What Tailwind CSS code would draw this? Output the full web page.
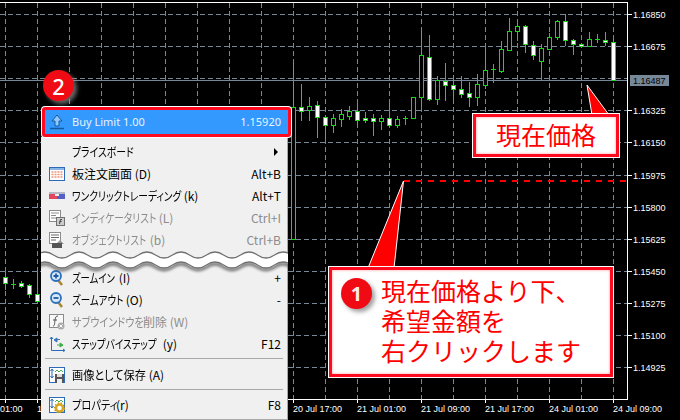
<!DOCTYPE html>
<html lang="ja">
<head>
    <meta charset="UTF-8">
    <title>MT4 Buy Limit</title>
    <script src="https://cdn.jsdelivr.net/npm/@tailwindcss/browser@4"></script>
</head>
<body class="bg-black">
    <div class="relative w-[680px] h-[420px] overflow-hidden bg-black font-['Noto_Sans_CJK_JP',sans-serif]">
        <!-- chart canvas, filled in by the script below -->
        <svg id="chart" class="block" width="680" height="420" viewBox="0 0 680 420"></svg>

        <!-- context menu -->
        <div class="absolute left-[41px] top-[137px] w-[247px] h-[283px] pt-[4px] bg-[#f0f0f0] border-r border-b border-[#a8a8a8] text-[12px] leading-none text-black whitespace-nowrap [font-feature-settings:'palt']">
            <div class="flex items-center justify-between h-[22px] pl-[31px] pr-[9px]">
                <span class="inline-block w-[62px] origin-left scale-x-[.82]">プライスボード</span>
                <span class="w-0 h-0 border-y-[4px] border-y-transparent border-l-[4px] border-l-black"></span>
            </div>
            <div class="flex items-center h-[22px] pl-[8px] pr-[6px]">
                <svg class="w-4 h-4 mr-[7px]" viewBox="0 0 16 16"><rect x=".5" y="1.500" width="15" height="13" fill="#fff" stroke="#2a6cb8"/><rect x="1" y="2" width="14" height="2" fill="#8ab4e4"/><path d="M2.500 6h2M5.500 6h2M8.500 6h2M11.500 6h2M2.500 8.500h2M5.500 8.500h2M8.500 8.500h2M11.500 8.500h2M2.500 11h2M5.500 11h2M8.500 11h2M11.500 11h2" stroke="#e8947c" stroke-width="1.500"/></svg>
                <span class="flex-1">板注文画面 (D)</span><span>Alt+B</span>
            </div>
            <div class="flex items-center h-[22px] pl-[8px] pr-[6px]">
                <svg class="w-4 h-4 mr-[7px]" viewBox="0 0 16 16"><rect x="0" y="4" width="8" height="7" fill="#e2485c"/><rect x="8" y="4" width="8" height="7" fill="#5560c4"/><rect x="0" y="4" width="16" height="2" fill="#b8b8c4"/><rect x="6" y="6" width="4" height="2" fill="#f0f0f0"/></svg>
                <span class="flex-1"><span class="inline-block w-[109px] origin-left scale-x-[.81]">ワンクリックトレーディング</span> (k)</span><span>Alt+T</span>
            </div>
            <div class="flex items-center h-[22px] pl-[8px] pr-[6px] text-[#8c8c8c]">
                <svg class="w-4 h-4 mr-[7px]" viewBox="0 0 16 16"><rect x=".5" y=".5" width="11" height="11" fill="#fff" stroke="#8c8c8c"/><path d="M2 3h8M2 5.500h5M2 8h5" stroke="#8c8c8c"/><rect x="7.500" y="7.500" width="8" height="8" fill="#ccc" stroke="#707070"/><path d="M10.500 14l1-4.500h1.500M10.500 11.500h2" stroke="#444" fill="none"/></svg>
                <span class="flex-1"><span class="inline-block w-[84px] origin-left scale-x-[.81]">インディケータリスト</span> (L)</span><span>Ctrl+I</span>
            </div>
            <div class="flex items-center h-[22px] pl-[8px] pr-[6px] text-[#8c8c8c]">
                <svg class="w-4 h-4 mr-[7px]" viewBox="0 0 16 16"><rect x=".5" y=".5" width="11" height="11" fill="#fff" stroke="#8c8c8c"/><path d="M2 3h8M2 5.500h8M2 8h5" stroke="#666"/><path d="M8 11l3-3 4 4H8z" fill="#999"/><rect x="3" y="11" width="10" height="5" fill="#555"/></svg>
                <span class="flex-1"><span class="inline-block w-[75px] origin-left scale-x-[.8]">オブジェクトリスト</span> (b)</span><span>Ctrl+B</span>
            </div>

            <div class="h-[16px]"></div>

            <div class="flex items-center h-[22px] pl-[8px] pr-[6px]">
                <svg class="w-4 h-4 mr-[7px]" viewBox="0 0 16 16"><path d="M9 10l4 5" stroke="#a8842c" stroke-width="2.500"/><circle cx="7" cy="6" r="5" fill="#d8e8f8" stroke="#2a70c0" stroke-width="1.800"/><path d="M4.500 6h5M7 3.500v5" stroke="#1d5aa0" stroke-width="1.800"/></svg>
                <span class="flex-1"><span class="inline-block w-[44px] origin-left scale-x-[.78]">ズームイン</span> (I)</span><span>+</span>
            </div>
            <div class="flex items-center h-[22px] pl-[8px] pr-[6px]">
                <svg class="w-4 h-4 mr-[7px]" viewBox="0 0 16 16"><path d="M9 10l4 5" stroke="#a8842c" stroke-width="2.500"/><circle cx="7" cy="6" r="5" fill="#d8e8f8" stroke="#2a70c0" stroke-width="1.800"/><path d="M4.500 6h5" stroke="#1d5aa0" stroke-width="1.800"/></svg>
                <span class="flex-1"><span class="inline-block w-[51px] origin-left scale-x-[.79]">ズームアウト</span> (O)</span><span>-</span>
            </div>
            <div class="flex items-center h-[22px] pl-[8px] pr-[6px] text-[#8c8c8c]">
                <svg class="w-4 h-4 mr-[7px]" viewBox="0 0 16 16"><rect x=".5" y=".5" width="14" height="13" fill="#f8f8f8" stroke="#8c8c8c"/><path d="M4 12c2 0 1.500-3 2-6s1-4 3-4M4 6h4" stroke="#555" fill="none"/><circle cx="12" cy="12" r="3.500" fill="#aaa"/><path d="M10.500 10.500l3 3M13.500 10.500l-3 3" stroke="#fff"/></svg>
                <span class="flex-1"><span class="inline-block w-[71px] origin-left scale-x-[.84]">サブウインドウを</span>削除 (W)</span>
            </div>
            <div class="flex items-center h-[22px] pl-[8px] pr-[6px]">
                <svg class="w-4 h-4 mr-[7px]" viewBox="0 0 16 16"><path d="M2.500 1v13.500H16" stroke="#2a6cb8" fill="none"/><path d="M1 3l1.500-2L4 3M14 13l2 1.500-2 1" stroke="#2a6cb8" fill="none"/><path d="M5 4l3-2v4zM8 3.500h3" fill="#3a76b8" stroke="#3a76b8"/><path d="M14 9l-3-2v4zM11 9H8" fill="#3fae49" stroke="#3fae49"/></svg>
                <span class="flex-1"><span class="inline-block w-[88px] origin-left scale-x-[.8]">ステップバイステップ</span> (y)</span><span>F12</span>
            </div>

            <div class="h-px mt-[3px] mb-[5px] mx-[4px] bg-[#a8a8a8]"></div>

            <div class="flex items-center h-[22px] pl-[8px] pr-[6px]">
                <svg class="w-4 h-4 mr-[7px]" viewBox="0 0 16 16"><rect x=".5" y=".5" width="15" height="15" fill="#fff" stroke="#2a6cb8"/><path d="M3 2v9M1.500 4L3 2l1.500 2M1.500 9L3 11l1.500-2" stroke="#2a6cb8" fill="none"/><path d="M6 5l2-2 2 2 2-2 2 2" stroke="#3fae49" fill="none"/><rect x="6" y="7" width="9" height="9" fill="#555"/><rect x="8" y="7" width="5" height="3" fill="#ddd"/><rect x="8" y="12" width="5" height="4" fill="#eee"/></svg>
                <span class="flex-1"><span class="inline-block w-[74px] origin-left scale-x-[.93]">画像として保存</span> (A)</span>
            </div>

            <div class="h-px mt-[3px] mb-[4px] mx-[4px] bg-[#a8a8a8]"></div>

            <div class="flex items-center h-[22px] pl-[8px] pr-[6px]">
                <svg class="w-4 h-4 mr-[7px]" viewBox="0 0 16 16"><rect x=".5" y=".5" width="15" height="15" fill="#fff" stroke="#2a6cb8"/><path d="M3 2v9M1.500 4L3 2l1.500 2M1.500 9L3 11l1.500-2" stroke="#2a6cb8" fill="none"/><path d="M6 5l2-2 2 2 2-2 2 2" stroke="#3fae49" fill="none"/><circle cx="10.500" cy="11" r="3.500" fill="none" stroke="#d8a820" stroke-width="2.500"/><circle cx="10.500" cy="11" r="5" fill="none" stroke="#c89818" stroke-width="1.500" stroke-dasharray="1.500 1.500"/></svg>
                <span class="flex-1"><span class="inline-block w-[44px] origin-left scale-x-[.85]">プロパティ</span>(r)</span><span>F8</span>
            </div>
        </div>

        <!-- torn edge across the menu -->
        <svg class="absolute left-[41px] top-[245px]" width="247" height="35" viewBox="0 0 247 35">
            <defs><path id="wave" fill="none" d="M-4.500 10q8.500-6 17 0t17 0 17 0 17 0 17 0 17 0 17 0 17 0 17 0 17 0 17 0 17 0 17 0 17 0 17 0 17 0"/></defs>
            <use href="#wave" y="12" stroke="#555" stroke-width="2.500" class="blur-[1.5px]"/>
            <use href="#wave" y="5" stroke="#fff" stroke-width="10"/>
            <use href="#wave" stroke="#707070" stroke-width="1.300"/>
            <use href="#wave" y="10" stroke="#707070" stroke-width="1.300"/>
        </svg>

        <!-- highlighted Buy Limit row -->
        <div class="absolute left-[42px] top-[107px] w-[249px] h-[30px] rounded-[3px] border-[3px] border-[#ff0a1e] bg-[#3399ff] shadow-[0_0_0_1px_#fff] flex items-center pl-[4px] pr-[7px] text-[11px] text-[#e8f2ff] font-['Noto_Sans',sans-serif]">
            <svg class="w-4 h-4 mr-[7px]" viewBox="0 0 16 16"><path d="M8 1l5 6h-3v5H6V7H3z" fill="#8fc8ff" stroke="#145a9e"/><path d="M1 14.500h14" stroke="#145a9e" stroke-width="1.500"/></svg>
            <span class="flex-1">Buy Limit 1.00</span><span>1.15920</span>
        </div>

        <!-- step badge 2 -->
        <div class="absolute left-[43px] top-[70px] w-[31px] h-[31px] rounded-full bg-[#f00a14] shadow-[3px_3px_4px_rgba(170,170,170,0.6)] flex items-center justify-center text-[22px] font-medium leading-none text-white font-['Noto_Sans',sans-serif]">2</div>

        <!-- callout: current price -->
        <div class="absolute left-[473px] top-[114px] w-[146px] h-[43px] pb-[3px] border-[3px] border-[#ff0a1e] bg-white shadow-[0_0_0_1px_#fff,inset_0_0_3px_#ff9a9a] flex items-center justify-center text-[25px] leading-none text-[#ff0000]">現在価格</div>

        <!-- callout: step 1 -->
        <div class="absolute left-[329px] top-[267px] w-[284px] h-[110px] border-[3px] border-[#ff0a1e] bg-white shadow-[0_0_0_1px_#fff,inset_0_0_3px_#ff9a9a] flex gap-[9px] pl-[9px] pt-[8px] text-[25px] leading-[30px] text-[#ff0000]">
            <div class="w-[31px] h-[31px] rounded-full bg-[#f00a14] shadow-[3px_3px_4px_rgba(120,120,120,0.7)] flex items-center justify-center text-[20px] font-bold leading-none text-[#ffe8e8] font-['Noto_Sans',sans-serif]">1</div>
            <p class="-mt-[3px]">現在価格より下、<br>希望金額を<br>右クリックします</p>
        </div>

        <script>
            const svg = document.getElementById('chart');
            const GRID = '#778899', GREEN = '#18d818';
            let out = '';
            const line = (x1, y1, x2, y2, color, dash, width) =>
                `<line x1="${x1}" y1="${y1}" x2="${x2}" y2="${y2}" stroke="${color}" stroke-width="${width || 1}" ${dash ? `stroke-dasharray="${dash}"` : ''} shape-rendering="crispEdges"/>`;
            const label = (x, y, s, color) =>
                `<text x="${x}" y="${y}" fill="${color || '#fff'}" font-family="Liberation Sans" font-size="9">${s}</text>`;

            // grid
            const prices = ['1.16850','1.16675',null,'1.16325','1.16150','1.15975','1.15800','1.15625','1.15450','1.15275','1.15100','1.14925'];
            prices.forEach((p, i) => {
                const y = Math.round(14 + i * 32.1) + .5;
                out += line(0, y, 627, y, GRID, '5 3');
                if (p) out += line(628, y, 632, y, '#fff') + label(633, y + 3.5, p);
            });
            for (let x = 5; x < 627; x += 32) out += line(x + .5, 3, x + .5, 399, GRID, '5 3');

            // current price line + tag
            out += line(0, 80.5, 627, 80.5, GRID);
            out += `<rect x="630" y="75" width="39" height="11" fill="${GRID}"/>` + label(633, 84, '1.16487', '#000');

            // candles: x, high, top, bottom, low, filled
            const left = [[5,272,277,283,290,1],[13,279,284,284,289,2],[21,281,283,286,288,1],[29,284,285,294,298,1],[37,270,294,301,301,1]];
            const right = [
                [10,186,322,717,717,0],[34,252,322,334,362,1],[58,292,319,330,362,0],[82,304,316,352,413,1],[106,348,352,376,417,1],
                [130,342,355,376,398,0],[154,327,343,356,381,0],[178,319,333,347,360,0],[202,313,334,361,376,1],[226,336,355,361,368,1],
                [250,342,355,364,408,1],[274,345,355,364,389,0],[298,310,355,376,380,1],[322,349,358,376,384,0],[346,348,355,357,374,2],
                [370,292,292,355,355,0],[394,85,166,292,320,0],[418,106,170,298,302,1],[442,228,241,298,314,0],[466,190,242,256,302,1],
                [490,224,256,268,302,1],[514,229,268,283,293,1],[538,246,280,292,320,1],[562,222,253,292,318,0],[586,145,211,256,266,0],
                [610,192,208,211,248,2],[634,124,148,212,218,0],[658,54,94,149,152,0],[682,62,79,94,122,0],[706,75,79,133,158,1],
                [730,124,136,166,180,1],[754,133,145,184,240,0],[778,98,112,148,150,0],[802,60,64,112,120,0],[826,43,64,121,139,1],
                [850,118,121,133,164,1],[874,131,133,138,140,1],[898,97,118,139,141,0],[922,102,118,121,128,2],[946,97,121,127,137,1],[970,115,127,241,243,1]
            ].map(c => [Math.round(290 + c[0] / 3), ...c.slice(1, 5).map(v => Math.round(v / 3)), c[5]]);

            [...left, ...right].forEach(([x, hi, top, bot, lo, fill]) => {
                out += line(x + .5, hi, x + .5, lo, GREEN);
                if (fill === 2) { out += line(x - 2, top + .5, x + 3, top + .5, GREEN); return; }
                out += `<rect x="${x - 1.5}" y="${top + .5}" width="4" height="${bot - top}" fill="${fill ? '#fff' : '#000'}" stroke="${GREEN}" shape-rendering="crispEdges"/>`;
            });

            // frame + axis
            out += line(0, 2.5, 628, 2.5, '#fff') + line(627.5, 2, 627.5, 400, '#fff') + line(0, 399.5, 628, 399.5, '#fff');
            [[5,''],[37,''],[293,'20 Jul 17:00'],[357,'21 Jul 01:00'],[421,'21 Jul 09:00'],[485,'21 Jul 17:00'],[549,'24 Jul 01:00'],[613,'24 Jul 09:00']].forEach(([x, s]) => {
                out += line(x + .5, 400, x + .5, 403, '#fff');
                if (s) out += label(x, 412, s);
            });
            out += label(0, 412, '01:00') + label(37, 412, '1');

            // pending order line
            out += line(404, 181, 627, 181, '#ff0000', '6 6', 2);

            // callout pointers
            out += '<polygon points="403.500,181 368,268 394,268" fill="#ff0000" stroke="#fff" stroke-width="1"/>';
            out += '<polygon points="587,85 592,115 609,115" fill="#ff0000" stroke="#fff" stroke-width="1"/>';

            svg.innerHTML = out;
        </script>
    </div>
</body>
</html>
